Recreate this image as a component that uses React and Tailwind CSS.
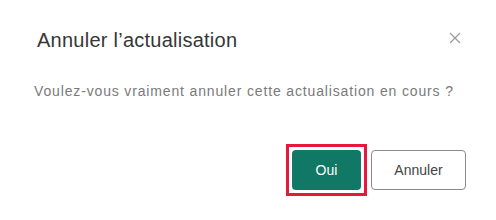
const App = () => {
  return (
    <div className="w-[496px] h-[220px] bg-white font-['Liberation_Sans',Arial,sans-serif] relative">
      <div className="flex items-start justify-between pl-[37px] pr-[33px] pt-[28px]">
        <h2 className="text-[20px] leading-[24px] tracking-[0.25px] text-[#363636]">Annuler l’actualisation</h2>
        <button className="w-[16px] h-[16px] mt-[2px] flex items-center justify-center text-[#9a9a9a]">
          <svg width="12" height="12" viewBox="0 0 12 12" fill="none" stroke="currentColor" strokeWidth="1.2">
            <path d="M1 1 L11 11 M11 1 L1 11" />
          </svg>
        </button>
      </div>
      <p className="pl-[34px] mt-[29px] text-[14px] leading-[20px] tracking-[0.85px] text-[#7a7a7a]">
        Voulez-vous vraiment annuler cette actualisation en cours ?
      </p>
      <div className="flex justify-end items-center gap-[4px] pr-[30px] mt-[43px]">
        <div className="border-[3px] border-[#e8173c] p-[3px]">
          <button className="w-[69px] h-[40px] rounded-[4px] bg-[#117865] text-white text-[14px]">
            Oui
          </button>
        </div>
        <button className="w-[95px] h-[40px] rounded-[4px] border border-[#8a8a8a] bg-white text-[#444] text-[14px]">
          Annuler
        </button>
      </div>
    </div>
  );
};

export default App;
